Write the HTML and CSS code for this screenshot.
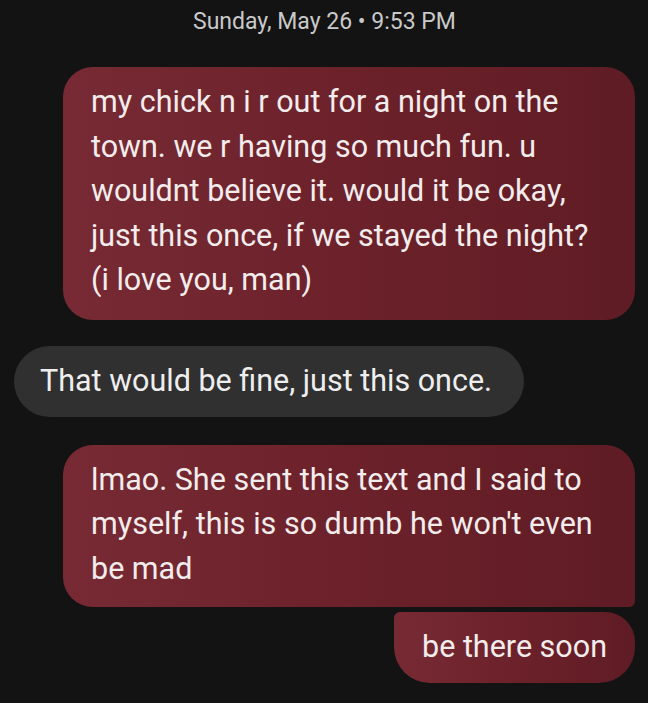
FILE: index.html
```html
<!DOCTYPE html>
<html>
<head>
<meta charset="utf-8">
<link rel="stylesheet" href="styles.css">
</head>
<body>
<div class="thread">
  <div class="stamp">Sunday, May 26 • 9:53 PM</div>
  <div class="msg out first">my chick n i r out for a night on the<br>town. we r having so much fun. u<br>wouldnt believe it. would it be okay,<br>just this once, if we stayed the night?<br>(i love you, man)</div>
  <div class="msg in">That would be fine, just this once.</div>
  <div class="group">
    <div class="msg out top">lmao. She sent this text and I said to<br>myself, this is so dumb he won't even<br>be mad</div>
    <div class="msg out bottom">be there soon</div>
  </div>
</div>
</body>
</html>
```

FILE: styles.css
```css
html, body {
  margin: 0;
  padding: 0;
  background: #131313;
}
.thread {
  display: flex;
  flex-direction: column;
  align-items: flex-start;
  padding: 0 13px 0 14px;
  font-family: Roboto, "Noto Sans", sans-serif;
  color: #f2ecec;
}
.stamp {
  align-self: stretch;
  text-align: center;
  font-size: 23px;
  color: #c9c9c9;
  padding-top: 7px;
  height: 38px;
  line-height: 30px;
  margin-bottom: 22px;
}
.msg {
  font-size: 30.5px;
  line-height: 44.5px;
  border-radius: 34px;
  box-sizing: border-box;
}
.out {
  background: linear-gradient(90deg, #772a33 0%, #6a2029 60%, #5f1c24 100%);
  align-self: flex-end;
  padding: 13px 26px 17px 28px;
}
.first {
  width: 572px;
  border-radius: 30px;
}
.in {
  background: #303030;
  margin-top: 26px;
  padding: 13px 32px 13.5px 26px;
  border-radius: 36px;
  color: #eeeeee;
}
.group {
  align-self: stretch;
  display: flex;
  flex-direction: column;
  align-items: flex-end;
  gap: 5px;
  margin-top: 28px;
}
.top {
  width: 572px;
  border-radius: 30px 30px 6px 30px;
  padding-bottom: 16px;
}
.bottom {
  border-radius: 6px 30px 36px 36px;
  padding: 13px 28px 13px 28px;
}
```
